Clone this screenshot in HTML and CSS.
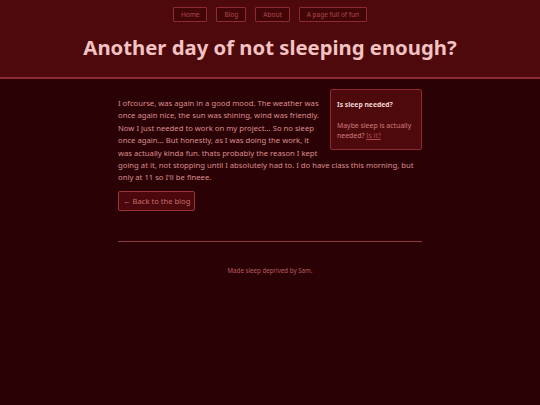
FILE: index.html
```html
<!DOCTYPE html>
<html>
<head>
<meta charset="utf-8">
<link rel="stylesheet" href="styles.css">
</head>
<body>
<header class="site-header">
  <nav class="nav">
    <a class="nav-btn" href="#">Home</a>
    <a class="nav-btn" href="#">Blog</a>
    <a class="nav-btn" href="#">About</a>
    <a class="nav-btn" href="#">A page full of fun</a>
  </nav>
  <h1 class="title">Another day of not sleeping enough?</h1>
</header>
<main class="main">
  <div class="post">
    <aside class="aside">
      <h2 class="aside-title">Is sleep needed?</h2>
      <p class="aside-text">Maybe sleep is actually needed? <a class="aside-link" href="#">Is it?</a></p>
    </aside>
    <p class="post-text">I ofcourse, was again in a good mood. The weather was once again nice, the sun was shining, wind was friendly. Now I just needed to work on my project... So no sleep once again... But honestly, as I was doing the work, it was actually kinda fun. thats probably the reason I kept going at it, not stopping until I absolutely had to. I do have class this morning, but only at 11 so I'll be fineee.</p>
  </div>
  <div class="back-row">
    <a class="back-btn" href="#">&larr; Back to the blog</a>
  </div>
  <hr class="rule">
  <footer class="footer">Made sleep deprived by Sam.</footer>
</main>
</body>
</html>
```
FILE: styles.css
```css
html, body {
  margin: 0;
  padding: 0;
}
body {
  background: #2a0205;
  font-family: "Noto Sans", "Open Sans", sans-serif;
  color: #dc8d8f;
  min-height: 405px;
}
.site-header {
  background: #4d090c;
  border-bottom: 2px solid #8c2b31;
  padding: 7px 0 15px;
  display: flex;
  flex-direction: column;
  align-items: center;
}
.nav {
  display: flex;
  gap: 9px;
}
.nav-btn {
  display: block;
  font-size: 6.5px;
  line-height: 13px;
  padding: 0 7px;
  border: 1px solid #8c2b31;
  border-radius: 1px;
  color: #b0474c;
  text-decoration: none;
  background: #420609;
}
.title {
  margin: 10px 0 0;
  font-size: 20.3px;
  line-height: 30px;
  font-weight: 700;
  color: #f3c2c2;
}
.main {
  width: 304px;
  margin: 0 auto;
  padding-top: 10px;
}
.post {
  display: flow-root;
}
.aside {
  float: right;
  width: 78px;
  margin: 0 0 0 8px;
  padding: 10px 6px 8px;
  background: #4d090c;
  border: 1px solid #8c2b31;
  border-radius: 2px;
}
.aside-title {
  margin: 0 0 11px;
  font-size: 6.8px;
  font-weight: 700;
  color: #f1d4d4;
  line-height: 10px;
}
.aside-text {
  margin: 0;
  font-size: 6.9px;
  line-height: 10px;
  color: #cf7b7e;
}
.aside-link {
  color: #b0474c;
}
.post-text {
  margin: 0;
  padding-top: 8px;
  font-size: 7.7px;
  line-height: 12.4px;
}
.back-row {
  display: flex;
  margin-top: 7px;
}
.back-btn {
  display: block;
  padding: 0 4px;
  font-size: 7.6px;
  line-height: 18px;
  color: #c9686c;
  text-decoration: none;
  background: #4a080c;
  border: 1px solid #9b3439;
  border-radius: 2px;
}
.rule {
  margin: 30px 0 0;
  border: 0;
  height: 1px;
  background: #8a3a40;
}
.footer {
  margin-top: 24px;
  text-align: center;
  font-size: 6.2px;
  color: #b85a5f;
}
```
